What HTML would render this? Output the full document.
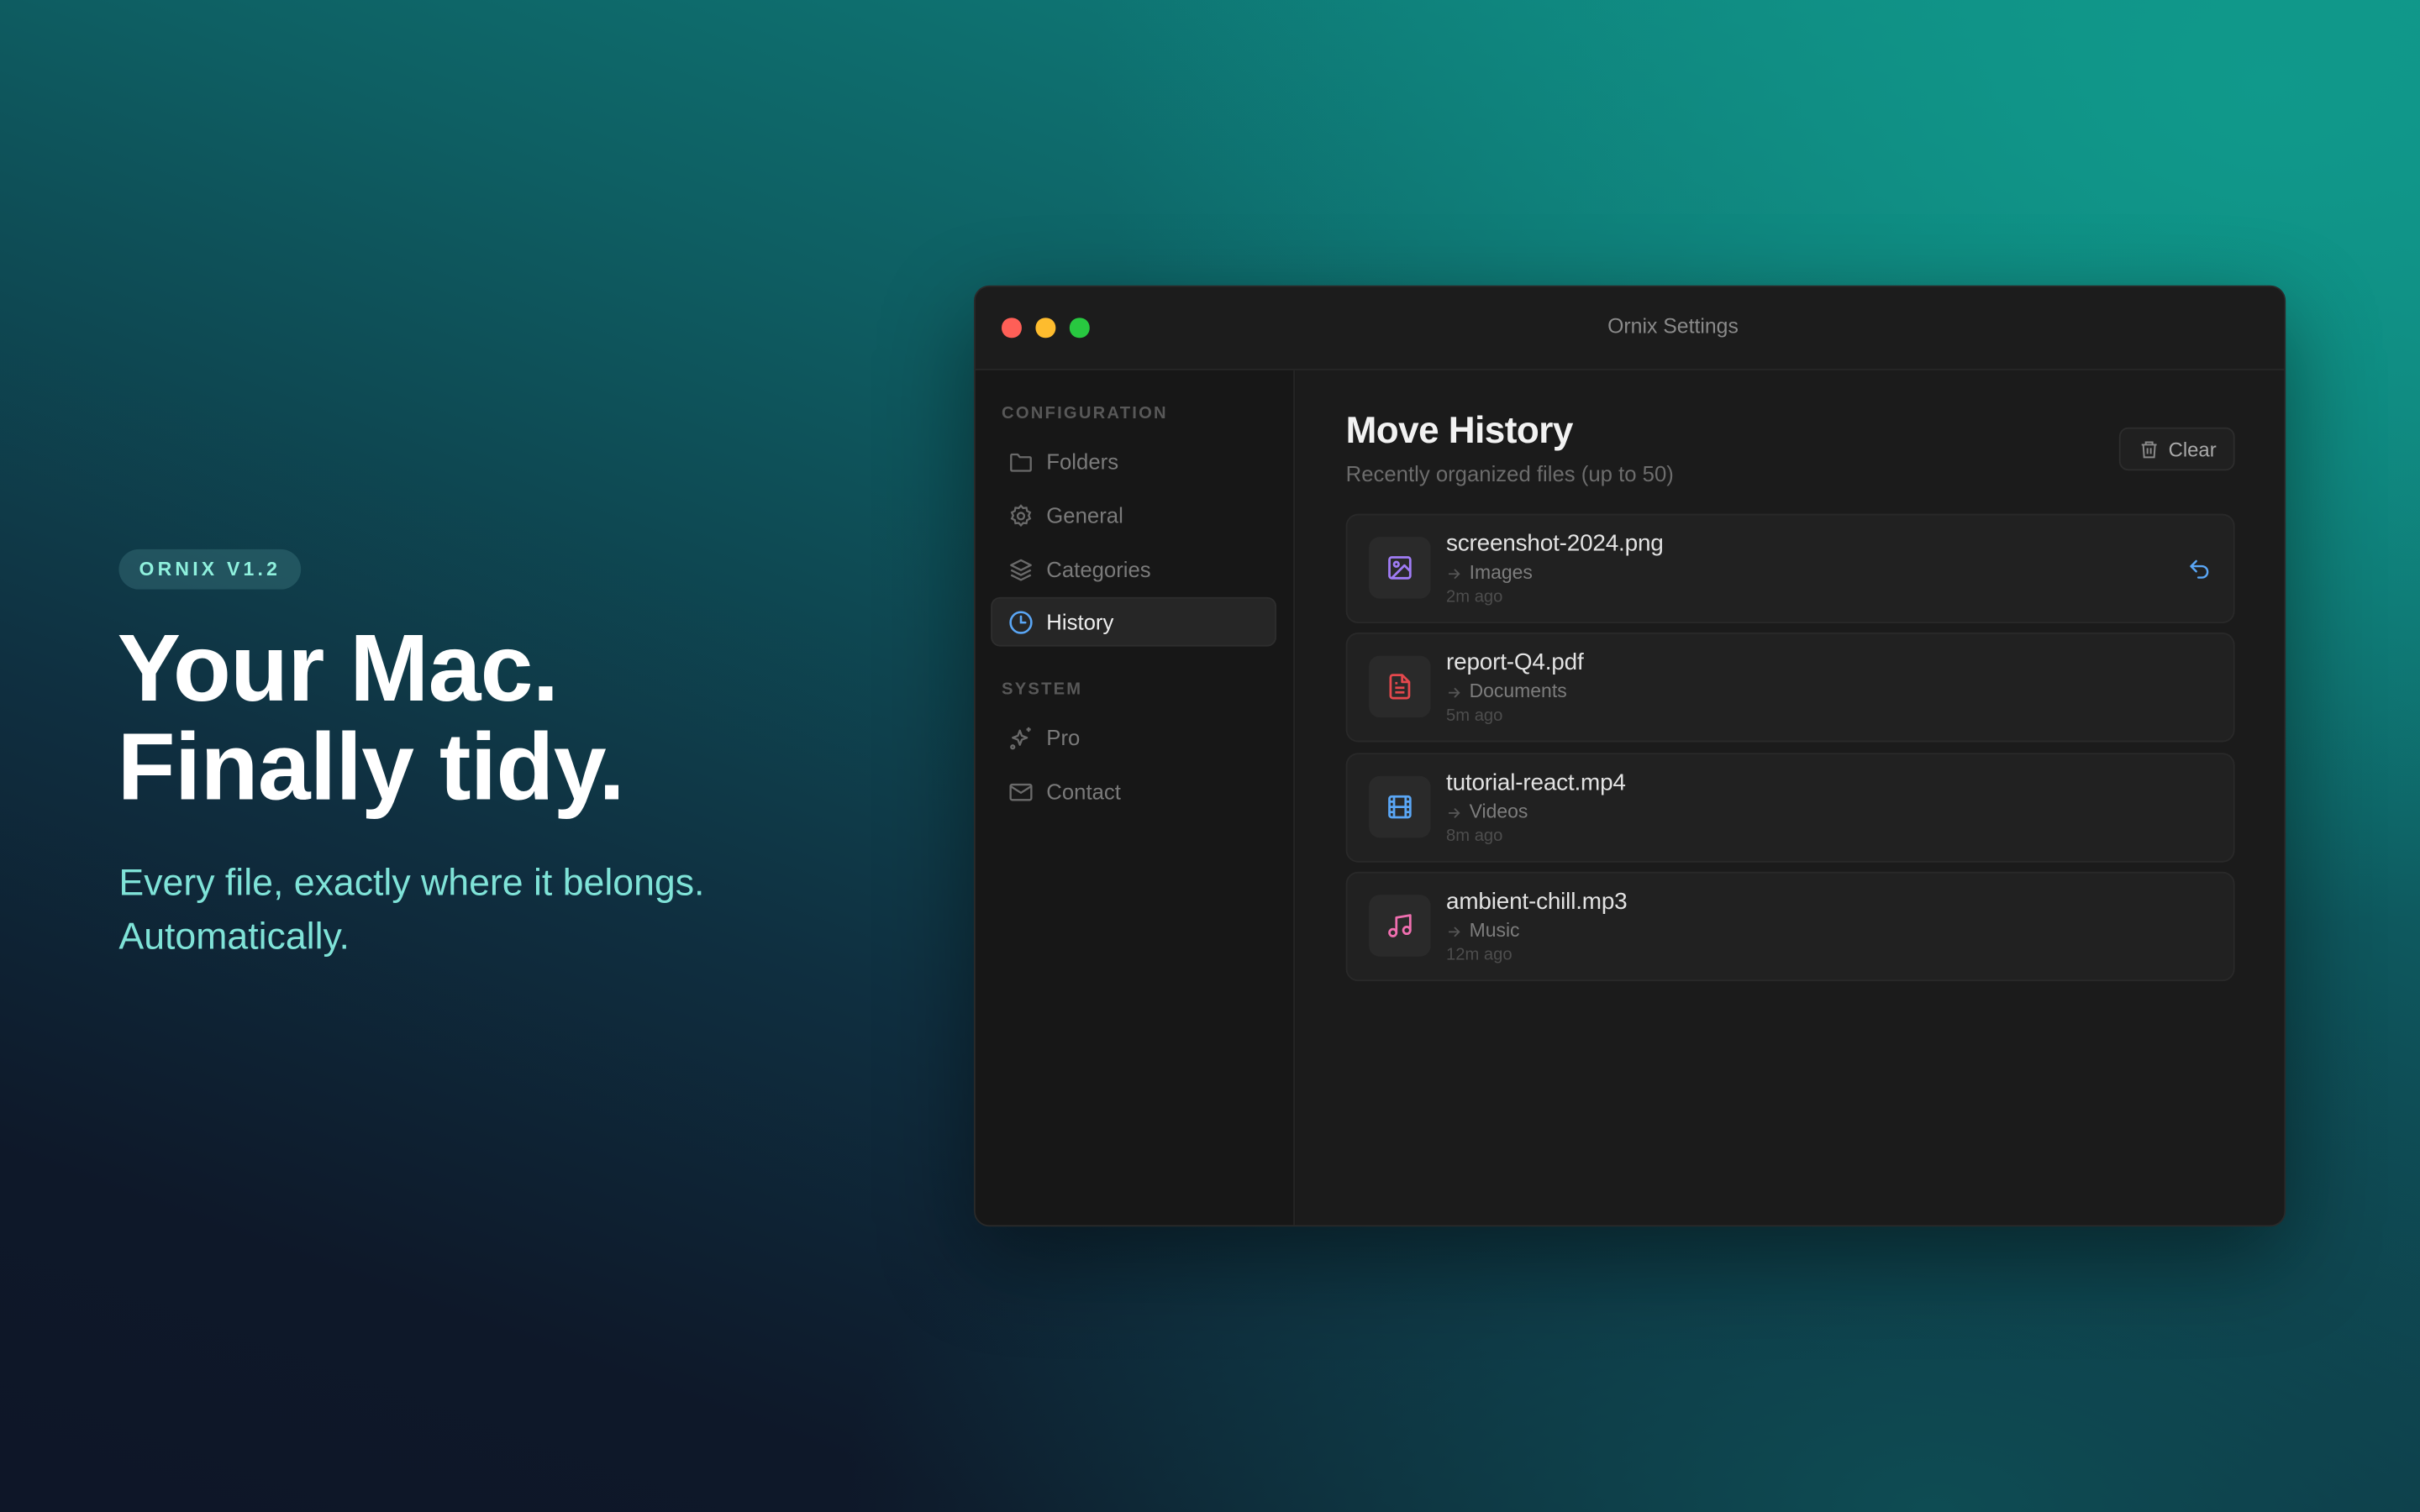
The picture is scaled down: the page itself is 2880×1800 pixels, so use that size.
<!DOCTYPE html>
<html><head><meta charset="utf-8"><style>
html,body{margin:0;padding:0;width:2880px;height:1800px;overflow:hidden}
body{background:
radial-gradient(ellipse 1400px 1000px at 2700px 100px, #10998b 0%, rgba(16,153,139,0) 100%),
radial-gradient(ellipse 1300px 700px at 2300px 1800px, rgba(14,80,86,0.9) 0%, rgba(14,80,86,0) 100%),
linear-gradient(200deg,#0f8f86 0%,#0e5f63 35%,#0f2f40 65%,#0e1829 85%,#0e1628 100%);
font-family:"Liberation Sans",sans-serif}
#s{position:absolute;left:0;top:0;width:1568px;height:980px;transform:scale(1.83673);transform-origin:0 0}
.badge{position:absolute;left:77px;top:356px;width:118px;height:26px;border-radius:13px;background:rgba(120,200,200,0.18);color:#8ff0dd;font-weight:bold;font-size:12.5px;letter-spacing:2.3px;text-align:center;line-height:26px}
.h1{position:absolute;left:76px;top:402px;color:#fff;font-weight:bold;font-size:61.5px;line-height:64px;letter-spacing:-0.4px}
.sub{position:absolute;left:77px;top:555px;color:#7fe3d8;font-size:24.3px;line-height:35px}
.win{position:absolute;left:631px;top:185px;width:850px;height:610px;border-radius:10px;background:#1b1b1b;overflow:hidden;box-shadow:0 20px 60px rgba(0,0,0,.45);border:1px solid #2a2a2a;box-sizing:border-box}
.tb{position:absolute;left:0;top:0;right:0;height:53px;border-bottom:1px solid #272727;background:#1c1c1c}
.dot{position:absolute;top:20px;width:12.5px;height:12.5px;border-radius:50%}
.title{position:absolute;left:0;right:0;top:18px;text-align:center;padding-left:56px;color:#8a8a8a;font-size:13.5px}
.side{position:absolute;left:0;top:54px;width:206px;bottom:0;background:#171717;border-right:1px solid #252525}
.sec{position:absolute;left:17px;color:#585858;font-size:11px;letter-spacing:1.2px;font-weight:bold}
.item{position:absolute;left:10px;width:185px;height:32px;border-radius:6px;color:#7a7a7a;font-size:14px}
.item svg{position:absolute;left:11px;top:8px}
.item span{position:absolute;left:36px;top:8px}
.act{background:#262626;border:1px solid #2e2e2e;box-sizing:border-box;color:#eee}
.main{position:absolute;left:207px;top:54px;right:0;bottom:0;background:#1b1b1b}
h2{position:absolute;left:33px;top:26px;margin:0;color:#f2f2f2;font-size:24px;font-weight:bold;letter-spacing:-0.3px}
.st{position:absolute;left:33px;top:59px;color:#6c6c6c;font-size:14px}
.clear{position:absolute;left:534px;top:37px;width:75px;height:28px;border:1px solid #2d2d2d;border-radius:6px;box-sizing:border-box;background:#202020;color:#a9a9a9;font-size:13px}
.card{position:absolute;left:33px;width:576px;height:71px;background:#212121;border:1px solid #292929;border-radius:8px;box-sizing:border-box}
.ib{position:absolute;left:14px;top:14px;width:40px;height:40px;border-radius:7px;background:#2a2a2a}
.ib svg{position:absolute;left:11px;top:11px}
.fn{position:absolute;left:64px;top:10px;color:#e2e2e2;font-size:15.2px;letter-spacing:-0.1px}
.cat{position:absolute;left:79px;top:30px;color:#7d7d7d;font-size:12.5px}
.ar{position:absolute;left:64px;top:33px}
.tm{position:absolute;left:64px;top:47px;color:#4d4d4d;font-size:11px}
</style></head><body><div id="s">
<div class="badge">ORNIX V1.2</div>
<div class="h1">Your Mac.<br>Finally tidy.</div>
<div class="sub">Every file, exactly where it belongs.<br>Automatically.</div>
<div class="win">
 <div class="tb">
  <div class="dot" style="left:17px;background:#fe5f57"></div>
  <div class="dot" style="left:39px;background:#febc2e"></div>
  <div class="dot" style="left:61px;background:#28c840"></div>
  <div class="title">Ornix Settings</div>
 </div>
 <div class="side">
  <div class="sec" style="top:22px">CONFIGURATION</div>
  <div class="item" style="top:43px"><svg width="17" height="17" viewBox="0 0 24 24" fill="none" stroke="#6a6a6a" stroke-width="1.8" stroke-linejoin="round"><path d="M3 6a1 1 0 0 1 1-1h5l2 2.5h9a1 1 0 0 1 1 1V19a1 1 0 0 1-1 1H4a1 1 0 0 1-1-1z"/></svg><span>Folders</span></div>
  <div class="item" style="top:78px"><svg width="17" height="17" viewBox="0 0 24 24" fill="none" stroke="#6a6a6a" stroke-width="1.8"><circle cx="12" cy="12" r="3"/><path d="M12 2.5l2 2.2 3-.3.6 2.9 2.7 1.4-1.2 2.8 1.2 2.8-2.7 1.4-.6 2.9-3-.3-2 2.2-2-2.2-3 .3-.6-2.9-2.7-1.4 1.2-2.8-1.2-2.8 2.7-1.4.6-2.9 3 .3z"/></svg><span>General</span></div>
  <div class="item" style="top:113px"><svg width="17" height="17" viewBox="0 0 24 24" fill="none" stroke="#6a6a6a" stroke-width="1.8" stroke-linejoin="round"><path d="M12 3l9 4.5-9 4.5-9-4.5z"/><path d="M3 12l9 4.5 9-4.5"/><path d="M3 16.5l9 4.5 9-4.5"/></svg><span>Categories</span></div>
  <div class="item act" style="top:147px"><svg width="17" height="17" viewBox="0 0 24 24" fill="none" stroke="#5aa6f5" stroke-width="2" stroke-linecap="round" style="left:10px;top:7px"><circle cx="12" cy="12" r="9.5"/><path d="M12 6.5V12h4"/></svg><span style="left:35px;top:7px">History</span></div>
  <div class="sec" style="top:201px">SYSTEM</div>
  <div class="item" style="top:222px"><svg width="17" height="17" viewBox="0 0 24 24" fill="none" stroke="#6a6a6a" stroke-width="1.8" stroke-linejoin="round"><path d="M11 5l1.8 4.7L17.5 11.5l-4.7 1.8L11 18l-1.8-4.7L4.5 11.5l4.7-1.8z"/><path d="M19 2v4M17 4h4"/><circle cx="4.5" cy="20" r="1.5"/></svg><span>Pro</span></div>
  <div class="item" style="top:257px"><svg width="17" height="17" viewBox="0 0 24 24" fill="none" stroke="#6a6a6a" stroke-width="1.8" stroke-linejoin="round"><rect x="2.5" y="5" width="19" height="14" rx="1.5"/><path d="M2.5 6.5l9.5 6 9.5-6"/></svg><span>Contact</span></div>
 </div>
 <div class="main">
  <h2>Move History</h2>
  <div class="st">Recently organized files (up to 50)</div>
  <div class="clear"><svg width="13" height="13" viewBox="0 0 24 24" fill="none" stroke="#8a8a8a" stroke-width="2" style="position:absolute;left:12px;top:7px"><path d="M3 6h18M8 6V3h8v3M5 6l1 15h12l1-15M10 10v7M14 10v7"/></svg><span style="position:absolute;left:31px;top:6px">Clear</span></div>
  <div class="card" style="top:93px"><div class="ib"><svg width="18" height="18" viewBox="0 0 24 24" fill="none" stroke="#a07cf5" stroke-width="2" stroke-linejoin="round"><rect x="3" y="3" width="18" height="18" rx="2"/><circle cx="9" cy="9" r="2"/><path d="M21 15l-5-5L5 21"/></svg></div><div class="fn">screenshot-2024.png</div><svg class="ar" width="10" height="10" viewBox="0 0 24 24" fill="none" stroke="#555" stroke-width="2.4"><path d="M4 12h16M13 5l7 7-7 7"/></svg><div class="cat">Images</div><div class="tm">2m ago</div><svg width="16" height="16" viewBox="0 0 24 24" fill="none" stroke="#5aa6f5" stroke-width="2" stroke-linecap="round" stroke-linejoin="round" style="position:absolute;left:544px;top:27px"><path d="M9 14L4 9l5-5"/><path d="M4 9h10.5a5.5 5.5 0 0 1 0 11H11"/></svg></div>
  <div class="card" style="top:170px"><div class="ib"><svg width="18" height="18" viewBox="0 0 24 24" fill="none" stroke="#e5484d" stroke-width="2" stroke-linejoin="round"><path d="M14 2H6a2 2 0 0 0-2 2v16a2 2 0 0 0 2 2h12a2 2 0 0 0 2-2V8z"/><path d="M14 2v6h6M16 13H8M16 17H8M10 9H8"/></svg></div><div class="fn">report-Q4.pdf</div><svg class="ar" width="10" height="10" viewBox="0 0 24 24" fill="none" stroke="#555" stroke-width="2.4"><path d="M4 12h16M13 5l7 7-7 7"/></svg><div class="cat">Documents</div><div class="tm">5m ago</div></div>
  <div class="card" style="top:248px"><div class="ib"><svg width="18" height="18" viewBox="0 0 24 24" fill="none" stroke="#5aa6f5" stroke-width="2" stroke-linejoin="round"><rect x="3" y="3" width="18" height="18" rx="2"/><path d="M7 3v18M17 3v18M3 7.5h4M3 12h18M3 16.5h4M17 7.5h4M17 16.5h4"/></svg></div><div class="fn">tutorial-react.mp4</div><svg class="ar" width="10" height="10" viewBox="0 0 24 24" fill="none" stroke="#555" stroke-width="2.4"><path d="M4 12h16M13 5l7 7-7 7"/></svg><div class="cat">Videos</div><div class="tm">8m ago</div></div>
  <div class="card" style="top:325px"><div class="ib"><svg width="18" height="18" viewBox="0 0 24 24" fill="none" stroke="#f06fb0" stroke-width="2" stroke-linejoin="round"><path d="M9 18V5l12-2v13"/><circle cx="6" cy="18" r="3"/><circle cx="18" cy="16" r="3"/></svg></div><div class="fn">ambient-chill.mp3</div><svg class="ar" width="10" height="10" viewBox="0 0 24 24" fill="none" stroke="#555" stroke-width="2.4"><path d="M4 12h16M13 5l7 7-7 7"/></svg><div class="cat">Music</div><div class="tm">12m ago</div></div>
 </div>
</div>
</div></body></html>
